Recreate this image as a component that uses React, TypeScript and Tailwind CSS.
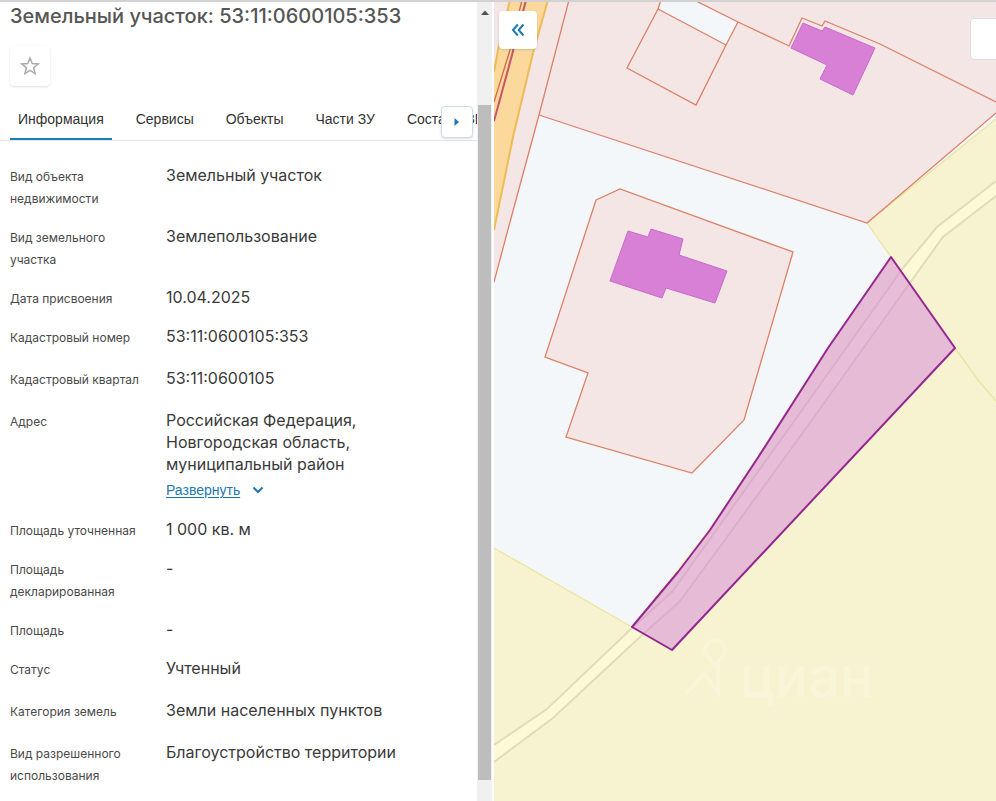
import React from "react";

type Row = { label: string; value: string; tall?: boolean; expandable?: boolean };

const rows: Row[] = [
  { label: "Вид объекта недвижимости", value: "Земельный участок" },
  { label: "Вид земельного участка", value: "Землепользование" },
  { label: "Дата присвоения", value: "10.04.2025" },
  { label: "Кадастровый номер", value: "53:11:0600105:353", tall: true },
  { label: "Кадастровый квартал", value: "53:11:0600105", tall: true },
  { label: "Адрес", value: "Российская Федерация, Новгородская область, муниципальный район", expandable: true },
  { label: "Площадь уточненная", value: "1 000 кв. м" },
  { label: "Площадь декларированная", value: "-" },
  { label: "Площадь", value: "-" },
  { label: "Статус", value: "Учтенный", tall: true },
  { label: "Категория земель", value: "Земли населенных пунктов", tall: true },
  { label: "Вид разрешенного использования", value: "Благоустройство территории" },
];

const tabs = ["Информация", "Сервисы", "Объекты", "Части ЗУ", "Состав ЕЗП"];

function Tabs() {
  return (
    <div className="relative mt-4 border-b border-[#e3e6e8]">
      <div role="tablist" className="ml-[10px] flex gap-4 overflow-hidden">
        {tabs.map((tab, i) => (
          <button
            key={tab}
            type="button"
            role="tab"
            aria-selected={i === 0}
            className={
              "h-[38px] shrink-0 whitespace-nowrap border-b-2 px-2 pb-0.5 font-['Liberation_Sans',Arial,sans-serif] text-[14px] leading-[20px] text-[#333] " +
              (i === 0 ? "border-[#1b7fbd]" : "border-transparent")
            }
          >
            {tab}
          </button>
        ))}
      </div>
      <button
        type="button"
        aria-label="Следующие вкладки"
        className="absolute right-1 top-1 flex size-8 items-center justify-center rounded border border-[#c9dfec] bg-white shadow-sm"
      >
        <svg width="6" height="8" viewBox="0 0 6 8" fill="#1b78b3">
          <path d="M0.5 0 L5 4 L0.5 8 Z" />
        </svg>
      </button>
    </div>
  );
}

function Details() {
  return (
    <dl className="mt-[23px] flex flex-col gap-[15px] px-[10px]">
      {rows.map((row) => (
        <div key={row.label} className={"flex " + (row.tall ? "min-h-[27px]" : "")}>
          <dt className="w-[156px] shrink-0 pr-5 pt-0.5 text-[12px] leading-[22px] text-[#4a4a4a]">{row.label}</dt>
          <dd className="max-w-[250px] text-[16px] leading-[22px] text-[#3a3a3a]">
            {row.value}
            {row.expandable && (
              <button
                type="button"
                className="mb-0.5 mt-1 flex items-center gap-3 font-['Liberation_Sans',Arial,sans-serif] text-[14px] text-[#1b78b3]"
              >
                <span className="underline underline-offset-2">Развернуть</span>
                <svg width="12" height="8" viewBox="0 0 12 8" fill="none" stroke="#1b78b3" strokeWidth="2">
                  <path d="M1.5 1.5 L6 6 L10.5 1.5" />
                </svg>
              </button>
            )}
          </dd>
        </div>
      ))}
    </dl>
  );
}

function Scrollbar() {
  return (
    <div className="flex w-[17px] shrink-0 flex-col items-center border-r-2 border-white bg-[#f0f0f0] pb-[21px]" aria-hidden="true">
      <svg className="my-2 shrink-0" width="8" height="5" viewBox="0 0 8 5" fill="#505050">
        <path d="M0 5 L4 0.5 L8 5 Z" />
      </svg>
      <div className="mt-[82px] w-[13px] grow bg-[#bdbdbd]" />
    </div>
  );
}

function ParcelMap() {
  return (
    <svg
      className="absolute inset-0 h-full w-full"
      viewBox="494 2 502 799"
      preserveAspectRatio="xMinYMin slice"
      role="img"
      aria-label="Карта участка"
    >
      <rect x="494" y="0" width="502" height="801" fill="#f4f7fa" />
      <path d="M494 0 H996 V113 L867 223 L539 115 L510 222 L494 282 Z" fill="#f5e6e6" />
      <path d="M867 223 L996 119 V801 H494 V548 L632 627 L715 520 L830 345 L891 257 Z" fill="#f7f3d0" />
      <path d="M494 548 L632 627 M867 223 L891 257 M955 348 L978 380 L996 401 M867 223 L996 119" fill="none" stroke="#ebe5a2" strokeWidth="1.3" />

      <path d="M510 0 L498 50 L494 72 V230 L513 137 L533 53 L548 0 Z" fill="#fbd89b" />
      <path d="M510 0 L498 50 L494 72 M548 0 L533 53 L513 137 L494 230" fill="none" stroke="#eebb55" strokeWidth="2" />
      <path d="M522 0 L510 50 L494 102" fill="none" stroke="#cf6a48" strokeWidth="1.3" />
      <path d="M526 0 L512 55 L494 121" fill="none" stroke="#c4566a" strokeWidth="2" />

      <path d="M661 0 H694 L738 22 L726 45 L658 9 Z" fill="#f4f7fa" />
      <g fill="none" stroke="#dd8068" strokeWidth="1.3">
        <path d="M569 0 L539 115 L510 222 L494 282" />
        <path d="M539 115 L867 223 L996 113" />
        <path d="M694 0 L738 22 L789 46 L802 18 L822 26 L825 21 L880 44 L996 102" />
        <path d="M661 0 L658 9 L627 68 L696 105 L726 45 L738 22 M658 9 L726 45" />
        <path d="M596 200 L620 189 L793 252 L744 420 L692 473 L566 437 L588 373 L545 357 Z" fill="#f4e6e5" />
      </g>
      <g fill="#d880d6" stroke="#c76bc8" strokeWidth="1">
        <path d="M803 23 L822 31 L825 27 L875 48 L853 95 L820 79 L827 65 L791 48 Z" />
        <path d="M628 231 L648 237 L651 229 L683 239 L679 255 L727 271 L715 303 L666 288 L662 298 L610 281 Z" />
      </g>

      <path
        d="M494 745 L547 709 L632 628 L672 592 L722 522 L795 420 L903 268 L937 227 L996 181 V196 L943 237 L912 280 L812 420 L730 533 L680 601 L640 637 L553 718 L494 762 Z"
        fill="#fdf9d6"
      />
      <path
        d="M494 745 L547 709 L632 628 L672 592 L722 522 L795 420 L903 268 L937 227 L996 181 M996 196 L943 237 L912 280 L812 420 L730 533 L680 601 L640 637 L553 718 L494 762"
        fill="none"
        stroke="#e1dbb8"
        strokeWidth="2"
      />
      <path
        d="M891 257 L955 348 L672 650 L632 627 L678 572 L710 530 L759 456 L828 348 Z"
        fill="#d68bdb"
        fillOpacity="0.54"
        stroke="#93278f"
        strokeWidth="2"
        strokeLinejoin="round"
      />

      <g opacity="0.5">
        <path
          d="M715 640 a10 10 0 0 1 10 10 c0 6 -6 10 -10 15 c-4 -5 -10 -9 -10 -15 a10 10 0 0 1 10 -10 Z M687 693 L704 673 L718 693 V664"
          fill="none"
          stroke="#f9f8e2"
          strokeWidth="4"
        />
        <text x="740" y="697" fontFamily="Inter, sans-serif" fontSize="56" fontWeight="500" fill="#f9f8e2">циан</text>
      </g>
    </svg>
  );
}

export default function App() {
  return (
    <div className="flex h-screen overflow-hidden border-t-2 border-[#d2d2d2] bg-white font-['Inter','Noto_Sans',sans-serif]">
      <aside className="flex w-[477px] shrink-0 flex-col overflow-hidden">
        <h1 className="ml-[10px] text-[20px] font-medium leading-[28px] text-[#565656]">Земельный участок: 53:11:0600105:353</h1>
        <button
          type="button"
          aria-label="Добавить в избранное"
          className="ml-[10px] mt-4 flex size-10 shrink-0 items-center justify-center rounded bg-white shadow"
        >
          <svg width="20" height="20" viewBox="0 0 20 20" fill="none" stroke="#ababab" strokeWidth="1.5">
            <path d="M10 2 L12.2 7.6 L18.2 7.9 L13.6 11.7 L15.1 17.6 L10 14.3 L4.9 17.6 L6.4 11.7 L1.8 7.9 L7.8 7.6 Z" />
          </svg>
        </button>
        <Tabs />
        <Details />
      </aside>
      <Scrollbar />
      <main className="relative min-w-0 grow overflow-hidden">
        <ParcelMap />
        <button
          type="button"
          aria-label="Свернуть панель"
          className="absolute left-[5px] top-[9px] flex size-[38px] items-center justify-center rounded bg-white shadow"
        >
          <svg width="14" height="14" viewBox="0 0 14 14" fill="none" stroke="#1b78b3" strokeWidth="2">
            <path d="M6.8 1.5 L2 7 L6.8 12.5 M12.5 1.5 L7.7 7 L12.5 12.5" />
          </svg>
        </button>
        <button
          type="button"
          aria-label="Инструменты карты"
          className="absolute -right-4 top-4 h-[42px] w-[42px] rounded border border-[#d8dde2] bg-white"
        />
      </main>
    </div>
  );
}
